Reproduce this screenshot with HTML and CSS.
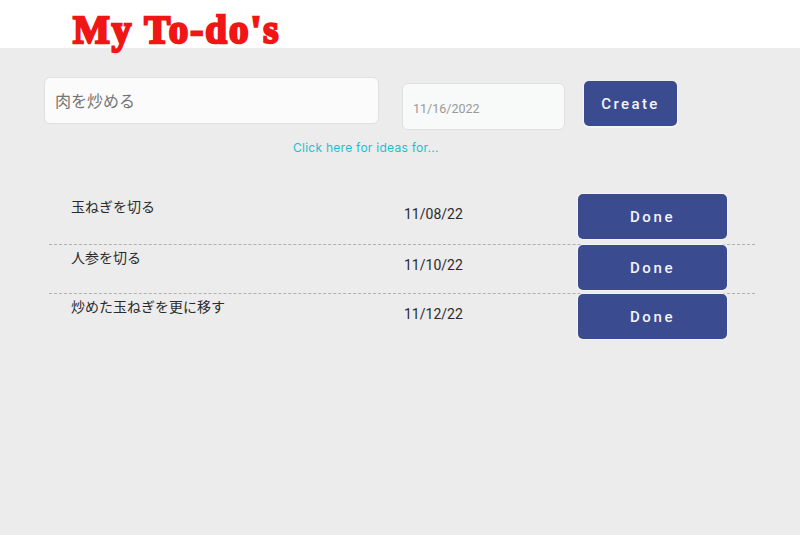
FILE: index.html
```html
<!DOCTYPE html>
<html lang="ja">
<head>
  <meta charset="UTF-8">
  <title>My To-do's</title>
  <link rel="stylesheet" href="styles.css">
</head>
<body>
  <header class="site-header">
    <h1 class="app-title">My To-do's</h1>
  </header>
  <main class="content">
    <form class="todo-form">
      <input class="text-input" type="text" placeholder="肉を炒める">
      <input class="date-input" type="text" value="11/16/2022">
      <button class="create-btn" type="button">Create</button>
    </form>
    <a class="ideas-link" href="#">Click here for ideas for...</a>
    <ul class="todo-list">
      <li class="todo-row">
        <span class="todo-name">玉ねぎを切る</span>
        <span class="todo-date">11/08/22</span>
        <button class="done-btn" type="button">Done</button>
      </li>
      <li class="todo-row">
        <span class="todo-name">人参を切る</span>
        <span class="todo-date">11/10/22</span>
        <button class="done-btn" type="button">Done</button>
      </li>
      <li class="todo-row">
        <span class="todo-name">炒めた玉ねぎを更に移す</span>
        <span class="todo-date">11/12/22</span>
        <button class="done-btn" type="button">Done</button>
      </li>
    </ul>
  </main>
</body>
</html>
```

FILE: styles.css
```css
* {
  box-sizing: border-box;
}
html, body {
  height: 100%;
}
body {
  margin: 0;
  display: flex;
  flex-direction: column;
  font-family: Roboto, "Noto Sans CJK JP", sans-serif;
  background-color: #ececec;
  color: #2b2b2b;
  overflow: hidden;
}
.site-header {
  height: 48px;
  padding-left: 73px;
  background: #fff;
}
.app-title {
  margin: 0;
  padding-top: 7px;
  font-family: "Liberation Serif", serif;
  font-size: 39px;
  line-height: 46px;
  font-weight: 700;
  letter-spacing: 2px;
  color: #f01616;
  -webkit-text-stroke: 2.4px #f01616;
  white-space: nowrap;
}
.content {
  flex: 1;
  padding-top: 29px;
}
.todo-form {
  display: flex;
  align-items: flex-start;
  padding-left: 44px;
}
.text-input {
  width: 335px;
  height: 47px;
  padding: 2px 10px 0;
  background: #fbfbfb;
  border: 1px solid #e0e0e0;
  border-radius: 6px;
  font-family: Roboto, "Noto Sans CJK JP", sans-serif;
  font-size: 16px;
}
.text-input::placeholder {
  color: #757575;
}
.date-input {
  width: 163px;
  height: 47px;
  margin: 6px 0 0 23px;
  padding: 3px 10px 0;
  background: #f8f9f9;
  border: 1px solid #e0e0e0;
  border-radius: 6px;
  font-family: Roboto, sans-serif;
  font-size: 12.5px;
  color: #999;
}
.create-btn {
  width: 93px;
  height: 45px;
  margin: 4px 0 0 19px;
  background: #3b4b8f;
  color: #f4f4f8;
  border: none;
  border-radius: 5px;
  box-shadow: 0 1px 0 1px #f4f4f4;
  font-family: Roboto, sans-serif;
  font-size: 15px;
  font-weight: 500;
  letter-spacing: 2.4px;
}
.ideas-link {
  display: block;
  width: 146px;
  margin: 10px 0 0 293px;
  font-family: Inter, sans-serif;
  font-size: 12px;
  line-height: 16px;
  letter-spacing: 0.26px;
  color: #1cbfd0;
  text-decoration: none;
  white-space: nowrap;
}
.todo-list {
  list-style: none;
  width: 706px;
  margin: 38px 0 0 49px;
  padding: 0;
}
.todo-row {
  display: flex;
  align-items: flex-start;
  height: 49px;
  border-bottom: 1px dashed #b0b0b0;
}
.todo-row:first-child {
  height: 51px;
}
.todo-row:last-child {
  border-bottom: none;
}
.todo-name {
  width: 333px;
  margin: 4px 0 0 22px;
  font-size: 14px;
  line-height: 18px;
  white-space: nowrap;
}
.todo-date {
  width: 174px;
  margin-top: 11px;
  font-size: 14px;
  line-height: 18px;
}
.done-btn {
  width: 149px;
  height: 45px;
  padding-top: 1px;
  background: #3b4b8f;
  color: #f4f4f8;
  border: none;
  border-radius: 5px;
  box-shadow: 0 0 0 1px #f4f4f4;
  font-family: Roboto, sans-serif;
  font-size: 15px;
  font-weight: 500;
  letter-spacing: 2.6px;
}
```
